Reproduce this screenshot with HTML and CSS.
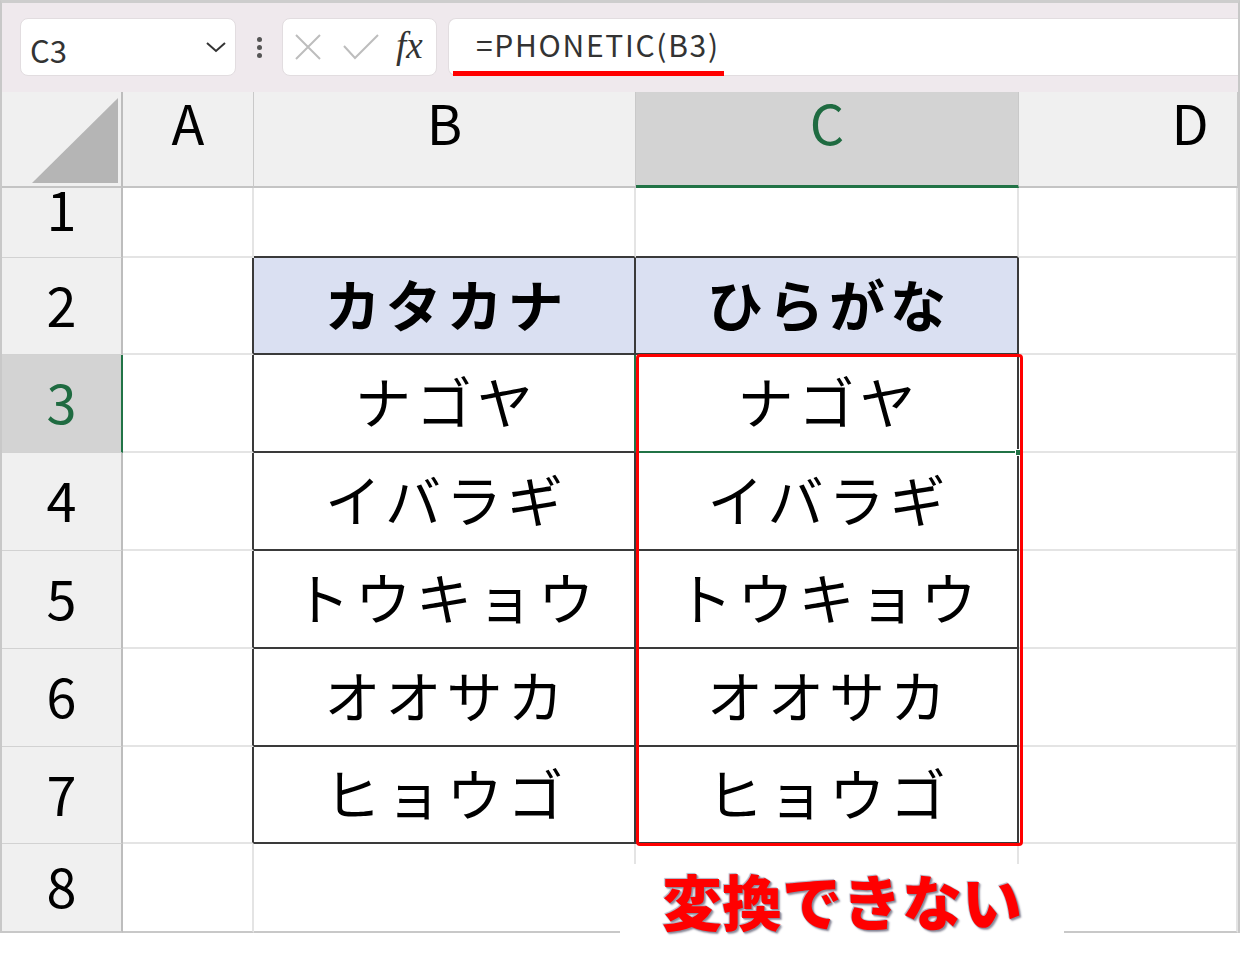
FILE: index.html
```html
<!DOCTYPE html>
<html>
	<head>
		<meta charset="utf-8" />
		<title>PHONETIC</title>
		<link rel="stylesheet" href="styles.css">
	</head>
	<body>
		<div id="app">
			<div id="toolbar">
				<div class="namebox">
					<span>C3</span>
					<svg width="22" height="12" viewBox="0 0 22 12"><path d="M2 2 L11 10 L20 2" fill="none" stroke="#333" stroke-width="2"/></svg>
				</div>
				<div class="dots"><i></i><i></i><i></i></div>
				<div class="btnbox">
					<svg class="x" width="26" height="26" viewBox="0 0 26 26"><path d="M1 1 L25 25 M25 1 L1 25" stroke="#bdbdbd" stroke-width="2" fill="none"/></svg>
					<svg class="ok" width="36" height="26" viewBox="0 0 36 26"><path d="M1 12 L12 24 L35 1" stroke="#bdbdbd" stroke-width="2" fill="none"/></svg>
					<span class="fx">fx</span>
				</div>
				<div class="formula"><span>=PHONETIC(B3)</span></div>
			</div>

			<div id="sheet">
				<div class="corner"><svg width="121" height="96" viewBox="0 0 121 96"><polygon points="30,91 116,91 116,6" fill="#b5b5b5"/></svg></div>
				<div class="ch">A</div>
				<div class="ch">B</div>
				<div class="ch sel">C</div>
				<div class="ch cut">D</div>

				<div class="rh r1">1</div>
				<div class="c"></div>
				<div class="c tp"></div>
				<div class="c tp"></div>
				<div class="c"></div>

				<div class="rh">2</div>
				<div class="c lt"></div>
				<div class="c t th">カタカナ</div>
				<div class="c t th">ひらがな</div>
				<div class="c"></div>

				<div class="rh sel">3</div>
				<div class="c lt"></div>
				<div class="c t green-r">ナゴヤ</div>
				<div class="c t active">ナゴヤ<b class="handle"></b></div>
				<div class="c"></div>

				<div class="rh">4</div>
				<div class="c lt"></div>
				<div class="c t">イバラギ</div>
				<div class="c t">イバラギ</div>
				<div class="c"></div>

				<div class="rh">5</div>
				<div class="c lt"></div>
				<div class="c t">トウキョウ</div>
				<div class="c t">トウキョウ</div>
				<div class="c"></div>

				<div class="rh">6</div>
				<div class="c lt"></div>
				<div class="c t">オオサカ</div>
				<div class="c t">オオサカ</div>
				<div class="c"></div>

				<div class="rh">7</div>
				<div class="c lt"></div>
				<div class="c t">ヒョウゴ</div>
				<div class="c t">ヒョウゴ</div>
				<div class="c"></div>

				<div class="rh last">8</div>
				<div class="c last"></div>
				<div class="c last"></div>
				<div class="c last"></div>
				<div class="c last"></div>

				<div class="redbox"></div>
				<div class="note">変換できない</div>
			</div>
		</div>
	</body>
</html>
```

FILE: styles.css
```css
*{margin: 0;padding: 0;box-sizing: border-box;}
body{
	width: 1240px;
	height: 955px;
	background: #fff;
	font-family: "Noto Sans CJK JP", "Noto Sans", sans-serif;
	color: #000;
	overflow: hidden;
}
#app{
	width: 1240px;
	border-top: 3px solid #cdcdcd;
	border-left: 2px solid #c8c8c8;
	border-right: 2px solid #c8c8c8;
}

/* formula bar */
#toolbar{
	height: 89px;
	background: #efe9ed;
	display: flex;
	align-items: flex-start;
	padding: 15px 0 0 18px;
}
.namebox{
	width: 216px;
	height: 58px;
	background: #fff;
	border: 1px solid #e2dde0;
	border-radius: 8px;
	display: flex;
	align-items: center;
	justify-content: space-between;
	padding: 0 8px 0 9px;
	font-size: 31px;
	color: #333;
}
.namebox span{margin-top: 4px;}
.dots{
	width: 46px;
	height: 58px;
	display: flex;
	flex-direction: column;
	align-items: center;
	justify-content: center;
	gap: 3px;
}
.dots i{
	width: 5px;
	height: 5px;
	border-radius: 50%;
	background: #555;
}
.btnbox{
	width: 155px;
	height: 58px;
	background: #fff;
	border: 1px solid #e2dde0;
	border-radius: 8px;
	display: flex;
	align-items: center;
	padding-left: 12px;
}
.btnbox .ok{margin-left: 22px;}
.fx{
	margin-left: 17px;
	font-family: "Liberation Serif", serif;
	font-style: italic;
	font-size: 37px;
	color: #333;
	margin-top: -4px;
}
.formula{
	flex: 1;
	margin-left: 11px;
	height: 58px;
	background: #fff;
	border: 1px solid #e2dde0;
	border-right: none;
	border-radius: 8px 0 0 8px;
	padding-left: 27px;
	font-size: 30px;
	color: #333;
	display: flex;
	align-items: center;
	position: relative;
}
.formula span{letter-spacing: 1.7px;margin-top: -6px;}
.formula:after{
	content: "";
	position: absolute;
	left: 4px;
	bottom: -1px;
	width: 271px;
	height: 5px;
	background: #ff0000;
}

/* sheet */
#sheet{
	position: relative;
	display: grid;
	grid-template-columns: 121px 131px 382px 383px 219px;
	grid-template-rows: 96px 70px 97px 98px 98px 98px 98px 97px 89px;
}
.corner{
	background: #f0f0f0;
	border-right: 2px solid #bdbdbd;
	border-bottom: 2px solid #c4c4c4;
}
.corner svg{display: block;}
.ch{
	background: #f0f0f0;
	border-right: 1px solid #c9c9c9;
	border-bottom: 2px solid #c4c4c4;
	font-size: 54px;
	line-height: 1;
	display: flex;
	justify-content: center;
	align-items: center;
	padding-bottom: 34px;
}
.ch.cut{padding-left: 124px;}
.ch.sel{
	background: #d3d3d3;
	color: #1f6b41;
	border-bottom: 3px solid #217346;
}
.rh{
	background: #f0f0f0;
	border-right: 2px solid #bdbdbd;
	border-bottom: 1px solid #d2d2d2;
	font-size: 54px;
	line-height: 1;
	display: flex;
	justify-content: center;
	align-items: center;
	padding-bottom: 5px;
}
.rh.r1{padding-bottom: 30px;}
.rh.sel{
	background: #d3d3d3;
	color: #1f6b41;
	border-right: 2px solid #217346;
}
.c{
	border-right: 2px solid #e4e4e4;
	border-bottom: 2px solid #e4e4e4;
	display: flex;
	justify-content: center;
	align-items: center;
	font-size: 56px;
	line-height: 1;
	letter-spacing: 5px;
	padding: 0 0 6px 5px;
}
.rh.last, .c.last{border-bottom: 2px solid #c8c8c8;}
.c.tp{border-bottom: 2px solid #3a3a3a;}
.c.lt{border-right: 2px solid #3a3a3a;}
.c.t{
	border-right: 2px solid #3a3a3a;
	border-bottom: 2px solid #3a3a3a;
}
.c.th{
	background: #dae0f2;
	font-weight: bold;
}
.c.green-r{border-right-color: #217346;}
.c.active{
	position: relative;
	border-bottom: 2px solid #217346;
}
.handle{
	position: absolute;
	right: -5px;
	bottom: -5px;
	width: 7px;
	height: 7px;
	background: #217346;
	border: 1px solid #fff;
}

/* annotations */
.redbox{
	position: absolute;
	left: 634px;
	top: 262px;
	width: 387px;
	height: 492px;
	border: 3px solid #ff0000;
	border-radius: 4px;
}
.note{
	position: absolute;
	left: 618px;
	top: 772px;
	width: 444px;
	height: 72px;
	background: #fff;
	display: flex;
	justify-content: center;
	align-items: center;
	font-size: 60px;
	font-weight: 900;
	line-height: 1;
	color: #ff0000;
	text-shadow: 1px 1px 1px #8a8a9a, -1px -1px 1px #b0b0c0, 2px 2px 2px #9a9aa8;
}
```
